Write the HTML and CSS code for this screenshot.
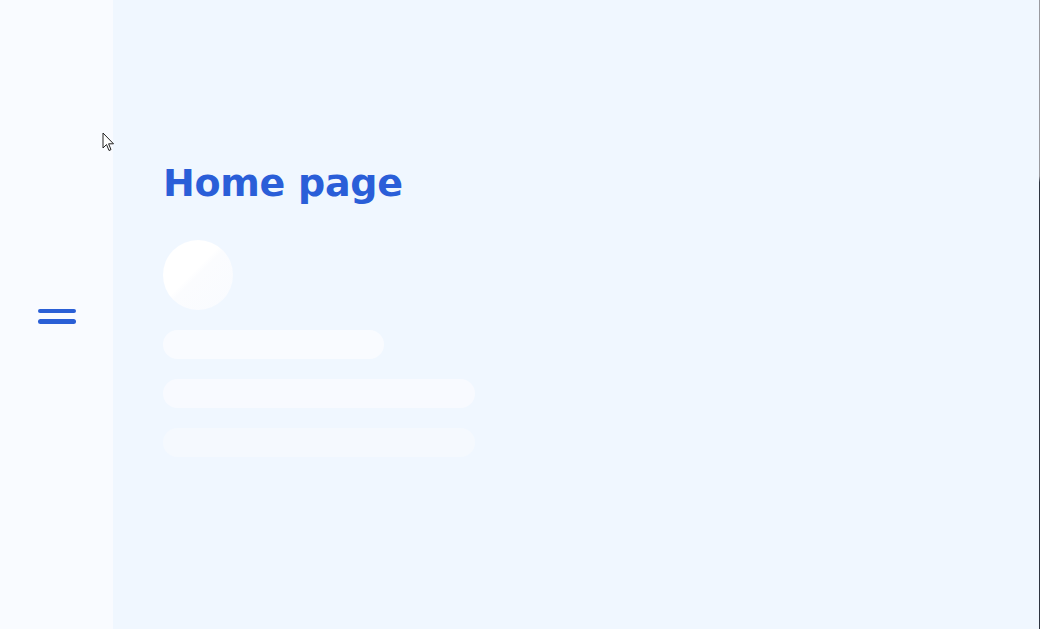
FILE: index.html
```html
<!DOCTYPE html>
<html lang="en">
<head>
<meta charset="utf-8">
<title>Home page</title>
<link rel="stylesheet" href="styles.css">
</head>
<body>
<div class="app">
  <aside class="sidebar">
    <button class="menu-btn" aria-label="Menu">
      <span class="line"></span>
      <span class="line"></span>
    </button>
  </aside>
  <main class="main">
    <h1 class="title">Home page</h1>
    <div class="skeleton">
      <div class="avatar"></div>
      <div class="bar bar-short"></div>
      <div class="bar bar-long bar-mid"></div>
      <div class="bar bar-long bar-faint"></div>
    </div>
  </main>
  <div class="edge"></div>
</div>
<svg class="cursor" width="13" height="20" viewBox="0 0 13 20" aria-hidden="true">
  <path d="M1 1 L1 16 L4.5 12.5 L7 18.5 L9 17.6 L6.6 11.8 L11.5 11.8 Z" fill="#fff" stroke="#222" stroke-width="1" stroke-linejoin="round"/>
</svg>
</body>
</html>
```
FILE: styles.css
```css
* { box-sizing: border-box; }
html, body { margin: 0; padding: 0; height: 100%; }
body {
  font-family: "DejaVu Sans", "Liberation Sans", sans-serif;
  background: #f0f7ff;
  overflow: hidden;
}
.app {
  display: flex;
  height: 629px;
  width: 1040px;
}
.sidebar {
  width: 113px;
  flex: none;
  background: #f9fbff;
  display: flex;
  align-items: center;
  justify-content: center;
  padding-top: 3px;
}
.menu-btn {
  border: 0;
  background: none;
  padding: 0;
  display: flex;
  flex-direction: column;
  gap: 6px;
  cursor: pointer;
}
.line {
  display: block;
  width: 38px;
  height: 4.5px;
  border-radius: 3px;
  background: #2a5fd6;
}
.main {
  flex: 1;
  background: #f0f7ff;
  padding: 157px 0 0 50px;
}
.title {
  margin: 0;
  font-family: "DejaVu Sans", sans-serif;
  font-weight: 700;
  font-size: 38px;
  line-height: 52px;
  color: #2a5ed8;
  letter-spacing: -0.3px;
}
.skeleton {
  margin-top: 31px;
  display: flex;
  flex-direction: column;
  gap: 20px;
}
.avatar {
  width: 70px;
  height: 70px;
  border-radius: 50%;
  background: linear-gradient(135deg, #ffffff 0%, #ffffff 45%, #fbfcfe 50%, #f9fbff 100%);
}
.bar {
  height: 29px;
  border-radius: 15px;
  background: #f9fbff;
}
.bar-short { width: 221px; }
.bar-long { width: 312px; }
.bar-mid { background: #f8faff; }
.bar-faint { background: #f5f9fe; }
.edge {
  width: 1px;
  flex: none;
  background: linear-gradient(#9a9aa0 0%, #9a9aa0 28%, #2e3440 29%, #2e3440 100%);
  margin-left: -1px;
}
.cursor {
  position: absolute;
  left: 102px;
  top: 132px;
}
```
